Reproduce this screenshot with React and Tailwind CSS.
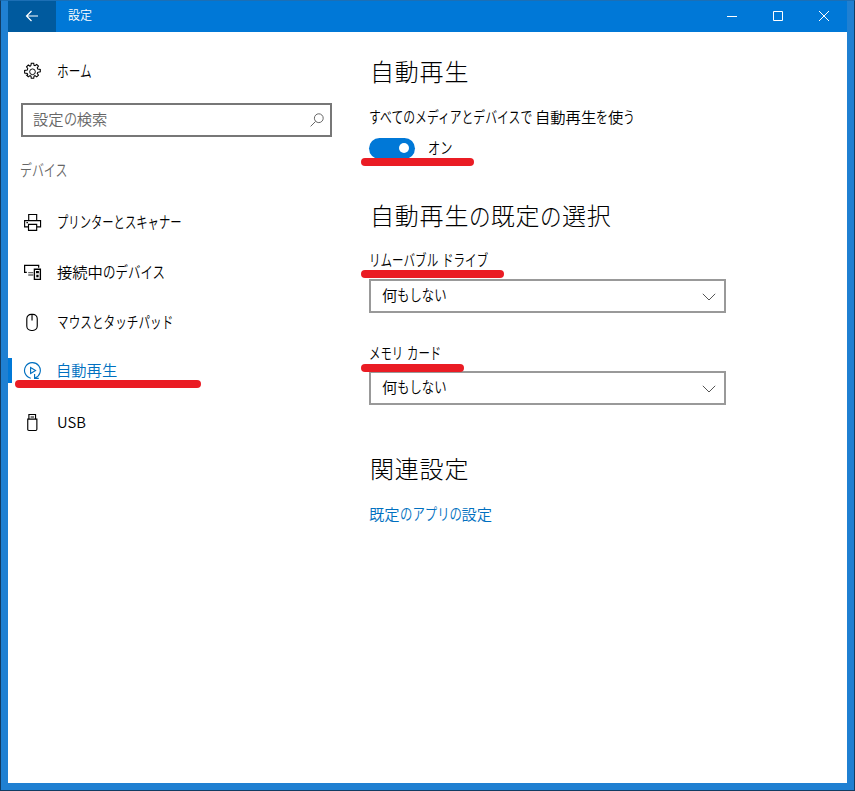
import React from "react";

const KANA = /([\u3041-\u30ff]+)/;

// UI kana are narrower than kanji, so each kana run is condensed to `kana` em per letter
function Ja({ text, kana = 0.75, className = "" }) {
  return (
    <span className={`whitespace-pre ${className}`}>
      {text.split(KANA).map((run, i) =>
        KANA.test(run) ? (
          <span
            key={i}
            className="inline-block"
            style={{ width: `${run.length * kana}em` }}
          >
            <span
              className="inline-block origin-left"
              style={{ transform: `scale(${kana}, 1.06)` }}
            >
              {run}
            </span>
          </span>
        ) : (
          <span key={i}>{run}</span>
        )
      )}
    </span>
  );
}

function Icon({ children }) {
  return (
    <svg
      viewBox="0 0 20 20"
      fill="none"
      stroke="currentColor"
      strokeWidth="1.2"
      className="w-[19px] h-[19px] shrink-0"
    >
      {children}
    </svg>
  );
}

const GearIcon = () => (
  <Icon>
    <path
      d="m8.4 3.5.3-2.2h2.6l.3 2.2 1 .4 1.8-1.3 1.9 1.8-1.3 1.8.5 1.1 2.7.5v2.6l-2.7.5-.5 1.1 1.3 1.8-1.9 1.9-1.8-1.3-1 .4-.3 2.4H8.7l-.3-2.4-1-.4-1.8 1.3-1.9-1.9L5 13.6 4.5 12l-2.8-.4V9l2.8-.5.5-1.6-1.3-1.8 1.9-1.9 1.8 1.3z"
      strokeWidth="1.1"
    />
    <circle cx="10" cy="10.3" r="3" strokeWidth="1" />
  </Icon>
);

const PrinterIcon = () => (
  <Icon>
    <path d="M6 8V1.6h8.4V8M5.4 14.6H1.7V8h16.8v6.6h-3.9M5.8 12h8.6v6.3H5.8zM3.6 10.2h1.6" />
  </Icon>
);

const DevicesIcon = () => (
  <Icon>
    <path d="M4 9.8H1.7V2.6h14.8V5" strokeWidth="1.3" />
    <path d="M12 6.6h6.3v10.6H12z" strokeWidth="1.4" />
    <path d="M14.3 9h1.8v1.2h-1.8zM14.6 13h1.2v1.4h-1.2z" strokeWidth="1.2" />
    <path d="M5.5 10.2h5.4M5.5 12.6h5.4" stroke="#666" strokeWidth="1.4" />
  </Icon>
);

const MouseIcon = () => (
  <Icon>
    <rect x="4" y="1.4" width="11" height="17" rx="4.6" />
    <path d="M9.5 2v6" />
  </Icon>
);

const PlayIcon = () => (
  <Icon>
    <path d="M8.2 18.1A8.3 8.3 0 1 1 12.4 17.9" />
    <path d="M8 6.8v6.4l5.2-3.2z" />
    <path d="M12.2 13.8v4.5h4.4" />
  </Icon>
);

const UsbIcon = () => (
  <Icon>
    <path d="M6.2 6.2V1.6h7v4.6M5 6.4h9.6v10.8q0 1.2-1.2 1.2H6.2q-1.2 0-1.2-1.2zM8 4.2h3.6" />
  </Icon>
);

const NAV = [
  { text: "プリンターとスキャナー", kana: 0.74, Icon: PrinterIcon },
  { text: "接続中のデバイス", kana: 0.815, Icon: DevicesIcon },
  { text: "マウスとタッチパッド", kana: 0.76, Icon: MouseIcon },
  { text: "自動再生", Icon: PlayIcon, active: true },
  { text: "USB", Icon: UsbIcon },
];

function NavItem({ item }) {
  return (
    <li
      className={`relative flex items-center h-[50px] pl-[15px] ${
        item.active ? "gap-[14px] pb-[3px] text-[#0070c0]" : "gap-[15px] text-black"
      }`}
    >
      {item.active && (
        <span className="absolute left-0 top-[11px] w-1 h-[25px] bg-[#0078d7]" />
      )}
      <item.Icon />
      <Ja
        text={item.text}
        kana={item.kana}
        className={item.text === "USB" ? "pb-px text-[14.8px]" : "pb-[3px]"}
      />
      {item.active && <Mark className="left-[7px] top-[33px] w-[186px]" />}
    </li>
  );
}

// red marker stroke
function Mark({ className }) {
  return (
    <span
      className={`absolute z-10 h-2 rounded-full bg-[#ea1c24] ${className}`}
    />
  );
}

function Dropdown({ value }) {
  return (
    <button className="flex items-center justify-between w-[357px] h-[34px] border-2 border-[#999] bg-white pl-[11px] pr-[8px]">
      <Ja text={value} kana={0.81} className="pb-[5px]" />
      <svg
        viewBox="0 0 14 8"
        fill="none"
        stroke="#555"
        className="w-[14px] h-2 mt-px"
      >
        <path d="M.8.8 7 7 13.2.8" />
      </svg>
    </button>
  );
}

function Heading({ children }) {
  return (
    <h2 className="pl-px text-[24px] leading-[32px] font-light tracking-[0.8px]">
      {children}
    </h2>
  );
}

function TitleBar() {
  return (
    <header className="flex h-[31px] bg-[#0078d7] text-white">
      <div className="flex items-center justify-center w-12 pb-px bg-[#005a9e]">
        <svg
          viewBox="0 0 14 12"
          fill="none"
          stroke="currentColor"
          strokeWidth="1.2"
          className="w-[14px] h-3"
        >
          <path d="M13 6H1.5M6.5 1l-5 5 5 5" />
        </svg>
      </div>
      <span className="pl-3 text-[12px] leading-[28px]">設定</span>
      <svg
        viewBox="0 0 138 31"
        fill="none"
        stroke="currentColor"
        className="w-[138px] h-[31px] ml-auto"
      >
        <path d="M18 15.5h10M64.5 10.5h9v9h-9zM110 10l10 10M120 10l-10 10" />
      </svg>
    </header>
  );
}

export default function App() {
  return (
    <div
      lang="ja"
      className="w-[855px] h-[791px] border border-[#123c63] border-t-[#1c6fb5] bg-[#1f80d2] px-[7px] pb-[7px] text-[15.3px] leading-5 font-[350] text-black font-['Noto_Sans_CJK_JP',sans-serif]"
    >
      <TitleBar />
      <div className="flex h-[751px] bg-white">
        <aside className="w-[361px]">
          <div className="flex items-center h-5 mt-[29px] pl-[15px] gap-[15px]">
            <GearIcon />
            <Ja text="ホーム" kana={0.76} className="pb-[3px]" />
          </div>
          <div className="flex items-center justify-between w-[311px] h-[34px] mt-[22px] ml-[13px] border-2 border-[#777] pl-[10px] pr-[6px] text-[#666]">
            <Ja text="設定の検索" kana={0.86} className="pb-[5px]" />
            <svg
              viewBox="0 0 14 14"
              fill="none"
              stroke="currentColor"
              className="w-[14px] h-[14px]"
            >
              <circle cx="8.8" cy="5.2" r="4.4" />
              <path d="M5.6 8.4.6 13.4" />
            </svg>
          </div>
          <p className="mt-[22px] ml-[12px] text-[#666]">
            <Ja text="デバイス" kana={0.78} />
          </p>
          <ul className="mt-[18px]">
            {NAV.map((item) => (
              <NavItem key={item.text} item={item} />
            ))}
          </ul>
        </aside>

        <main className="pt-[23px]">
          <Heading>自動再生</Heading>
          <p className="mt-[19px]">
            <Ja text="すべてのメディアとデバイスで自動再生を使う" kana={0.775} />
          </p>
          <div className="relative flex items-center h-5 mt-[12px]">
            <span className="flex items-center justify-end w-[46px] h-[21px] pr-[6px] rounded-full bg-[#0078d7]">
              <span className="w-[10px] h-[10px] rounded-full bg-white" />
            </span>
            <Ja text="オン" kana={0.8} className="ml-[13px] pb-[2px]" />
            <Mark className="-left-2 top-[20px] w-[113px]" />
          </div>

          <div className="mt-[41px]">
            <Heading>
              <Ja text="自動再生の既定の選択" kana={0.9} />
            </Heading>
          </div>
          <div className="relative mt-[18px] mb-[10px]">
            <Ja text="リムーバブル ドライブ" kana={0.755} />
            <Mark className="-left-2 top-[21px] w-[143px]" />
          </div>
          <Dropdown value="何もしない" />
          <div className="relative mt-[29px] mb-[9px]">
            <Ja text="メモリ カード" kana={0.745} />
            <Mark className="-left-2 top-[22px] w-[103px]" />
          </div>
          <Dropdown value="何もしない" />

          <div className="mt-[47px]">
            <Heading>関連設定</Heading>
          </div>
          <a href="#" className="block mt-[19px] text-[#0070c0]">
            <Ja text="既定のアプリの設定" kana={0.81} />
          </a>
        </main>
      </div>
    </div>
  );
}
